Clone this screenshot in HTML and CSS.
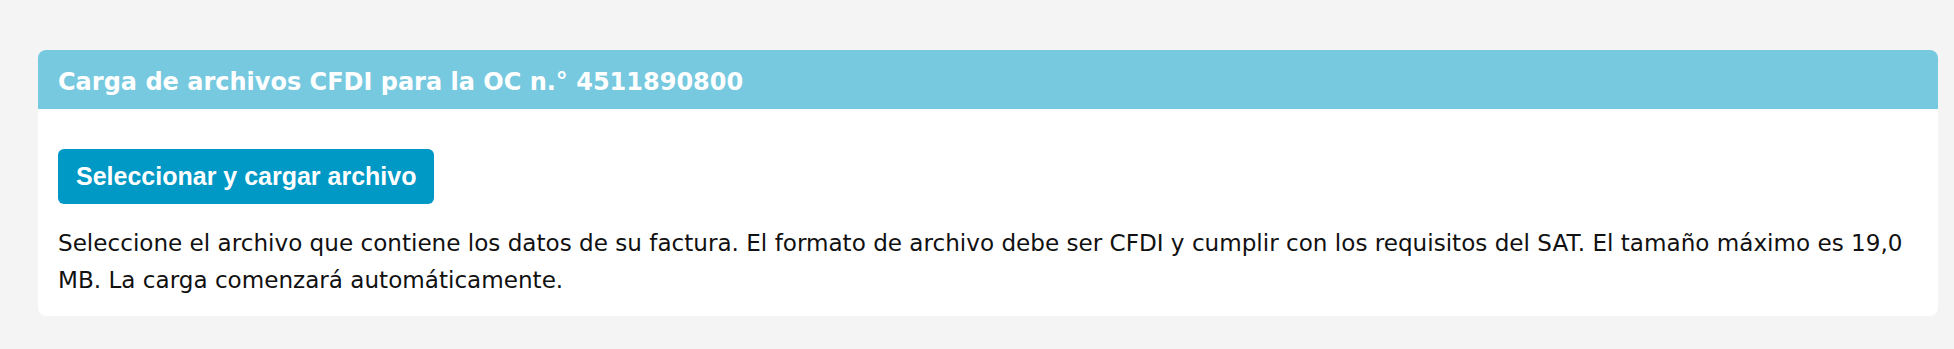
FILE: index.html
```html
<!DOCTYPE html>
<html lang="es">
<head>
<meta charset="utf-8">
<title>Carga de archivos CFDI</title>
<link rel="stylesheet" href="styles.css">
</head>
<body>
<main class="page">
  <section class="card">
    <header class="card-header">
      <h1 class="card-title">Carga de archivos CFDI para la OC n.° 4511890800</h1>
    </header>
    <div class="card-body">
      <button class="upload-btn" type="button">Seleccionar y cargar archivo</button>
      <p class="help-text">Seleccione el archivo que contiene los datos de su factura. El formato de archivo debe ser CFDI y cumplir con los requisitos del SAT. El tamaño máximo es 19,0 MB. La carga comenzará automáticamente.</p>
    </div>
  </section>
</main>
</body>
</html>
```

FILE: styles.css
```css
html, body {
  margin: 0;
  padding: 0;
  background: #f4f4f4;
}
.page {
  padding: 50px 16px 0 38px;
}
.card {
  background: #ffffff;
  border-radius: 8px;
  overflow: hidden;
}
.card-header {
  background: #77c9df;
  height: 59px;
  box-sizing: border-box;
  display: flex;
  align-items: center;
  padding: 4px 20px 0;
}
.card-title {
  margin: 0;
  color: #ffffff;
  font-family: "DejaVu Sans", sans-serif;
  font-weight: bold;
  font-size: 24px;
  line-height: 1;
}
.card-body {
  padding: 40px 20px 17px;
}
.upload-btn {
  display: block;
  border: 0;
  border-radius: 6px;
  background: #0098c5;
  color: #ffffff;
  font-family: "Liberation Sans", Arial, sans-serif;
  font-weight: bold;
  font-size: 25px;
  height: 55px;
  padding: 0 18px;
  cursor: pointer;
}
.help-text {
  margin: 21px 0 0;
  color: #111111;
  font-family: "DejaVu Sans", sans-serif;
  font-size: 23.1px;
  line-height: 37px;
}
```
